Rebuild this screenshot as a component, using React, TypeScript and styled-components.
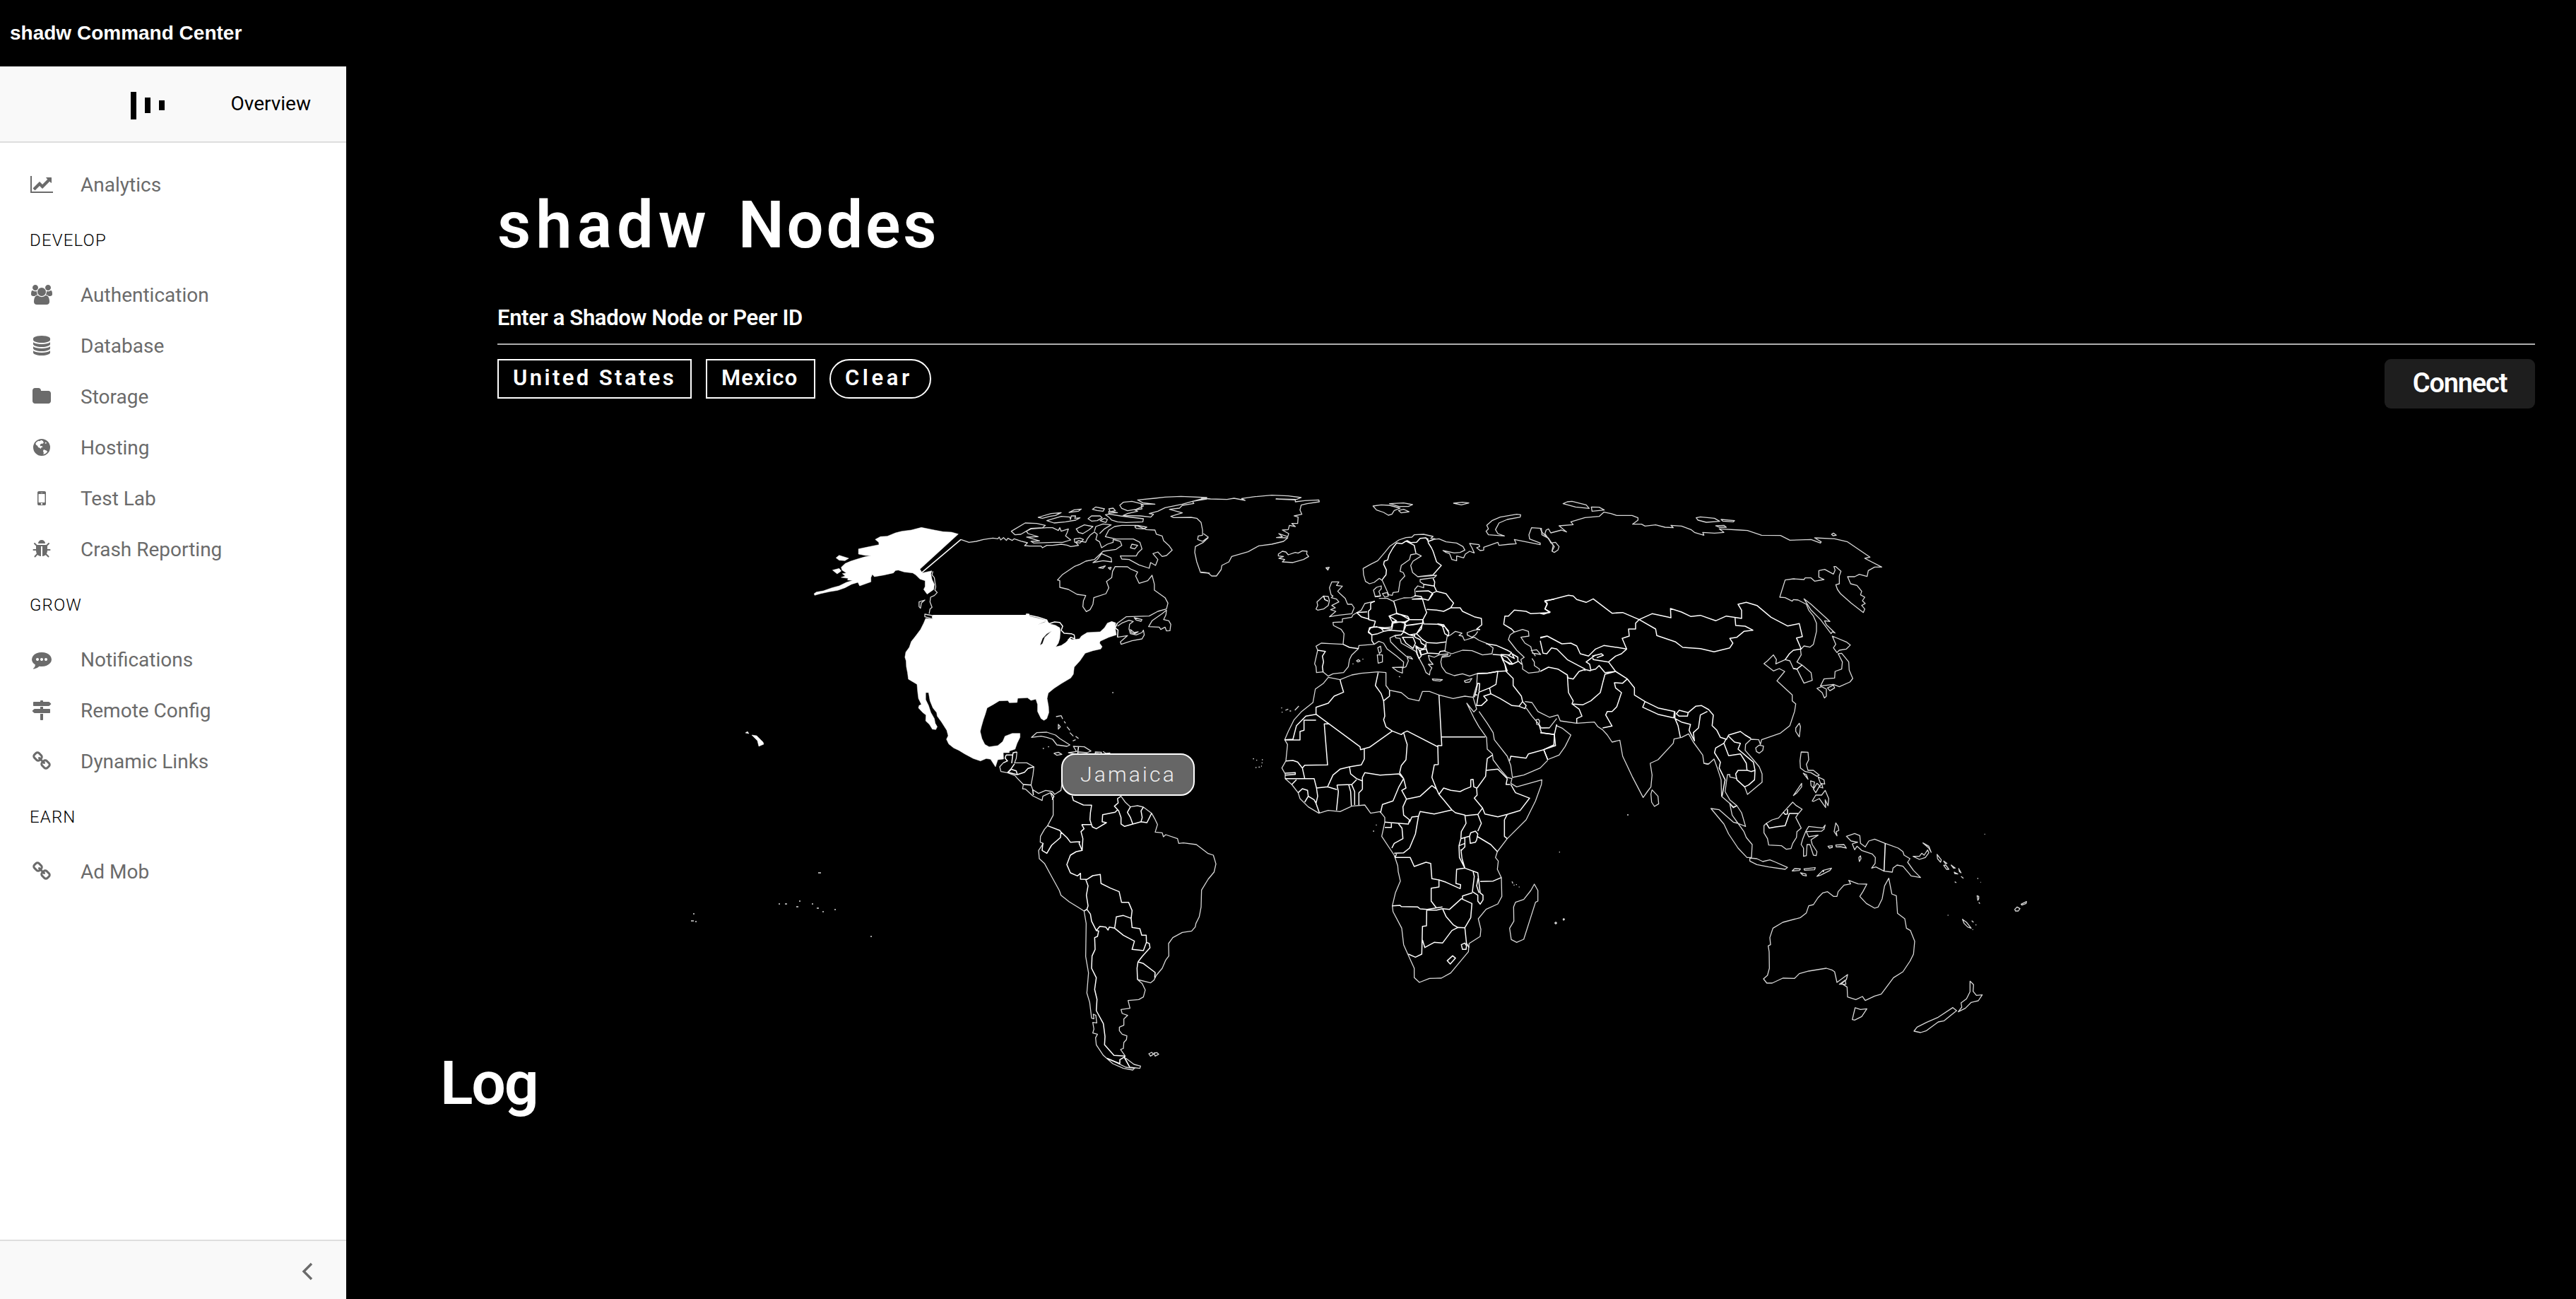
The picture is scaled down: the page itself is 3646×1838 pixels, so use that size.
import React from "react";
import styled, { createGlobalStyle } from "styled-components";

const GlobalStyle = createGlobalStyle`
  * { box-sizing: border-box; }
  body { margin: 0; background: #000; font-family: Roboto, sans-serif; }
  h1, h2, p { margin: 0; }
`;

const INK = "#6b6b6b";

const Page = styled.div`
  display: flex;
  flex-direction: column;
  width: 3646px;
  height: 1838px;
  overflow: hidden;
  background: #000;
`;

const TopBar = styled.header`
  display: flex;
  align-items: center;
  height: 94px;
  flex: none;
  padding: 0 14px;
  color: #fff;
  font: bold 28px "Liberation Sans", Arial, sans-serif;
  letter-spacing: 0;
`;

const Body = styled.div`
  display: flex;
  flex: 1;
  min-height: 0;
`;

const Sidebar = styled.aside`
  display: flex;
  flex-direction: column;
  width: 490px;
  flex: none;
  background: #fff;
`;

const Overview = styled.div`
  display: flex;
  align-items: center;
  justify-content: space-between;
  height: 108px;
  padding: 0 50px 2px 185px;
  background: #f9f9f9;
  border-bottom: 2px solid #dedede;
  font-size: 28px;
  color: #000;
`;

const Bars = styled.div`
  display: flex;
  align-items: center;
  gap: 12px;
  padding-top: 6px;
`;

const Bar = styled.span<{ $h: number }>`
  width: 8px;
  height: ${(p) => p.$h}px;
  background: #000;
`;

const Nav = styled.nav`
  flex: 1;
  padding-top: 24px;
`;

const Item = styled.a`
  display: flex;
  align-items: center;
  height: 72px;
  padding: 0 0 2px 41px;
  color: ${INK};
  font-size: 28px;
`;

const IconBox = styled.span`
  display: flex;
  justify-content: center;
  width: 36px;
  margin-right: 37px;
`;

const Section = styled.div`
  display: flex;
  align-items: center;
  height: 84px;
  padding: 0 0 1px 42px;
  color: #000;
  font-size: 24px;
  font-weight: 300;
  letter-spacing: 1.15px;
`;

const Collapse = styled.div`
  display: flex;
  align-items: center;
  justify-content: flex-end;
  height: 84px;
  padding: 4px 47px 0 0;
  background: #f9f9f9;
  border-top: 2px solid #dedede;
`;

const Main = styled.main`
  display: flex;
  flex-direction: column;
  flex: 1;
  padding: 169px 58px 0 214px;
  color: #fff;
`;

const Title = styled.h1`
  height: 108px;
  line-height: 112px;
  font-size: 92px;
  font-weight: 600;
  word-spacing: 15px;
  white-space: nowrap;
`;

const Word = styled.span<{ $track: number }>`
  letter-spacing: ${(p) => p.$track}px;
`;

const Field = styled.div`
  display: flex;
  align-items: flex-end;
  height: 117px;
  padding-bottom: 18px;
  border-bottom: 2px solid #adadad;
  font-size: 31px;
  line-height: 36px;
  font-weight: 600;
  letter-spacing: -0.35px;
`;

const Actions = styled.div`
  display: flex;
  align-items: flex-start;
  gap: 20px;
  height: 192px;
  padding-top: 20px;
`;

const Chip = styled.button<{ $w: number; $round?: boolean; $track: number }>`
  width: ${(p) => p.$w}px;
  height: 56px;
  padding: 0 0 3px 20px;
  border: 2px solid #fff;
  border-radius: ${(p) => (p.$round ? 28 : 0)}px;
  background: transparent;
  color: #fff;
  font: 600 31px Roboto, sans-serif;
  letter-spacing: ${(p) => p.$track}px;
  text-align: left;
  white-space: nowrap;
`;

const Connect = styled.button`
  width: 213px;
  height: 70px;
  margin-left: auto;
  padding: 0 0 2px;
  border: 0;
  border-radius: 9px;
  background: #1e1e1e;
  color: #fff;
  font: 600 38px Roboto, sans-serif;
  letter-spacing: -1.2px;
`;

const MapStage = styled.section`
  position: relative;
  height: 800px;
  margin-left: 196px;
  width: 2000px;
`;

const MapSvg = styled.svg`
  display: block;
  overflow: visible;
  path {
    vector-effect: non-scaling-stroke;
    stroke-linejoin: round;
  }
`;

const Coast = styled.path`
  fill: none;
  stroke: #d8d8d8;
  stroke-width: 1.3px;
`;

const Border = styled.path`
  fill: none;
  stroke: #fff;
  stroke-width: 1.5px;
`;

const Selected = styled.path`
  fill: #fff;
  stroke: #fff;
  stroke-width: 0.5px;
`;

const Tooltip = styled.div`
  position: absolute;
  left: 602px;
  top: 386px;
  display: flex;
  align-items: center;
  width: 189px;
  height: 60px;
  padding: 0 0 2px 25px;
  border: 2px solid #fff;
  border-radius: 20px;
  background: #666;
  color: #eee;
  font: 300 30px Roboto, sans-serif;
  letter-spacing: 3.2px;
`;

const LogTitle = styled.h2`
  margin-left: -81px;
  line-height: 106px;
  font-size: 86px;
  font-weight: 600;
  letter-spacing: -2.2px;
`;

interface Glyph { w: number; d: string }

const icons: Record<string, Glyph> = {
  chart: { w: 2048, d: "M2048 1536v128h-2048v-1536h128v1408h1920zM1920 288v435q0 21-19.5 29.5t-35.5-7.5l-121-121-633 633q-10 10-23 10t-23-10l-233-233-416 416-192-192 585-585q10-10 23-10t23 10l233 233 464-464-121-121q-16-16-7.5-35.5t29.5-19.5h435q14 0 23 9t9 23z" },
  users: { w: 1920, d: "M593 896q-162 5-265 128h-134q-82 0-138-40.5t-56-118.5q0-353 124-353 6 0 43.5 21t97.5 42.5 119 21.5q67 0 133-23-5 37-5 66 0 139 81 256zM1664 1533q0 120-73 189.5t-194 69.5h-874q-121 0-194-69.5t-73-189.5q0-53 3.5-103.5t14-109 26.5-108.5 43-97.5 62-81 85.5-53.5 111.5-20q10 0 43 21.5t73 48 107 48 135 21.5 135-21.5 107-48 73-48 43-21.5q61 0 111.5 20t85.5 53.5 62 81 43 97.5 26.5 108.5 14 109 3.5 103.5zM640 256q0 106-75 181t-181 75-181-75-75-181 75-181 181-75 181 75 75 181zM1344 640q0 159-112.5 271.5t-271.5 112.5-271.5-112.5-112.5-271.5 112.5-271.5 271.5-112.5 271.5 112.5 112.5 271.5zM1920 865q0 78-56 118.5t-138 40.5h-134q-103-123-265-128 81-117 81-256 0-29-5-66 66 23 133 23 59 0 119-21.5t97.5-42.5 43.5-21q124 0 124 353zM1792 256q0 106-75 181t-181 75-181-75-75-181 75-181 181-75 181 75 75 181z" },
  database: { w: 1792, d: "M896 768q237 0 443-43t325-127v170q0 69-103 128t-280 93.5-385 34.5-385-34.5-280-93.5-103-128v-170q119 84 325 127t443 43zM896 1536q237 0 443-43t325-127v170q0 69-103 128t-280 93.5-385 34.5-385-34.5-280-93.5-103-128v-170q119 84 325 127t443 43zM896 1152q237 0 443-43t325-127v170q0 69-103 128t-280 93.5-385 34.5-385-34.5-280-93.5-103-128v-170q119 84 325 127t443 43zM896 0q208 0 385 34.5t280 93.5 103 128v128q0 69-103 128t-280 93.5-385 34.5-385-34.5-280-93.5-103-128v-128q0-69 103-128t280-93.5 385-34.5z" },
  folder: { w: 1792, d: "M1728 608v704q0 92-66 158t-158 66h-1216q-92 0-158-66t-66-158v-960q0-92 66-158t158-66h320q92 0 158 66t66 158v32h672q92 0 158 66t66 158z" },
  globe: { w: 1792, d: "M896 128a768 768 0 1 1 0 1536a768 768 0 1 1 0-1536zM860 240L700 330 610 300 500 370 400 440 340 560 400 680 500 740 590 900 720 940 800 1030 880 900 1010 860 900 760 780 780 740 660 860 560 980 560 1120 430 1010 420 1040 330zM1250 420L1180 520 1280 560 1350 500zM1090 1080L1020 1210 1080 1390 1050 1530 1250 1460 1420 1290 1330 1180 1220 1150z" },
  mobile: { w: 1792, d: "M976 1408q0-33-23.5-56.5t-56.5-23.5-56.5 23.5-23.5 56.5 23.5 56.5 56.5 23.5 56.5-23.5 23.5-56.5zM1184 1248v-704q0-13-9.5-22.5t-22.5-9.5h-512q-13 0-22.5 9.5t-9.5 22.5v704q0 13 9.5 22.5t22.5 9.5h512q13 0 22.5-9.5t9.5-22.5zM992 400q0-16-16-16h-160q-16 0-16 16t16 16h160q16 0 16-16zM1280 384v1024q0 52-38 90t-90 38h-512q-52 0-90-38t-38-90v-1024q0-52 38-90t90-38h512q52 0 90 38t38 90z" },
  bug: { w: 1792, d: "M1696 960q0 26-19 45t-45 19h-224q0 171-67 290l208 209q19 19 19 45t-19 45q-18 19-45 19t-45-19l-198-197q-5 5-15 13t-42 28.5-65 36.5-82 29-97 13v-896h-128v896q-51 0-101.5-13.5t-87-33-66-39-43.5-32.5l-15-14-183 207q-20 21-48 21-24 0-43-16-19-18-20.5-44.5t15.5-46.5l202-227q-58-114-58-274h-224q-26 0-45-19t-19-45 19-45 45-19h224v-294l-173-173q-19-19-19-45t19-45 45-19 45 19l173 173h844l173-173q19-19 45-19t45 19 19 45-19 45l-173 173v294h224q26 0 45 19t19 45zM1216 384h-640q0-133 93.5-226.5t226.5-93.5 226.5 93.5 93.5 226.5z" },
  comment: { w: 1792, d: "M640 896q0-53-37.5-90.5t-90.5-37.5-90.5 37.5-37.5 90.5 37.5 90.5 90.5 37.5 90.5-37.5 37.5-90.5zm384 0q0-53-37.5-90.5t-90.5-37.5-90.5 37.5-37.5 90.5 37.5 90.5 90.5 37.5 90.5-37.5 37.5-90.5zm384 0q0-53-37.5-90.5t-90.5-37.5-90.5 37.5-37.5 90.5 37.5 90.5 90.5 37.5 90.5-37.5 37.5-90.5zm384 0q0 174-120 321.5t-326 233-450 85.5q-110 0-211-18-173 173-435 229-52 10-86 13-12 1-22-6t-13-18q-4-15 20-37 5-5 23.5-21.5t25.5-23.5 23.5-25.5 24-31.5 20.5-37 20-48 14.5-57.5 12.5-72.5q-146-90-229.5-216.5t-83.5-269.5q0-174 120-321.5t326-233 450-85.5 450 85.5 326 233 120 321.5z" },
  signs: { w: 1792, d: "M1745 297q10 10 10 23t-10 23l-141 141q-28 28-68 28h-1344q-26 0-45-19t-19-45v-256q0-26 19-45t45-19h576v-64q0-26 19-45t45-19h128q26 0 45 19t19 45v64h512q40 0 68 28zM768 1216h256v512q0 26-19 45t-45 19h-128q-26 0-45-19t-19-45v-512zM1600 768q26 0 45 19t19 45v256q0 26-19 45t-45 19h-1344q-40 0-68-28l-141-141q-10-10-10-23t10-23l141-141q28-28 68-28h512v-192h256v192h576z" },
  link: { w: 1792, d: "M1520 1216q0-40-28-68l-208-208q-28-28-68-28-42 0-72 32 3 3 19 18.5t21.5 21.5 15 19 13 25.5 3.5 27.5q0 40-28 68t-68 28q-15 0-27.5-3.5t-25.5-13-19-15-21.5-21.5-18.5-19q-33 31-33 73 0 40 28 68l206 207q27 27 68 27 40 0 68-26l147-146q28-28 28-67zM817 511q0-40-28-68l-206-207q-28-28-68-28-39 0-68 27l-147 146q-28 28-28 67 0 40 28 68l208 208q27 27 68 27 42 0 72-31-3-3-19-18.5t-21.5-21.5-15-19-13-25.5-3.5-27.5q0-40 28-68t68-28q15 0 27.5 3.5t25.5 13 19 15 21.5 21.5 18.5 19q33-31 33-73zM1712 1216q0 120-85 203l-147 146q-83 83-203 83-121 0-204-85l-206-207q-83-83-83-203 0-123 88-209l-88-88q-86 88-208 88-120 0-204-84l-208-208q-84-84-84-204t85-203l147-146q83-83 203-83 121 0 204 85l206 207q83 83 83 203 0 123-88 209l88 88q86-88 208-88 120 0 204 84l208 208q84 84 84 204z" },
};

const Icon = ({ name }: { name: string }) => {
  const g = icons[name];
  return (
    <svg width={(g.w / 1792) * 28} height={28} viewBox={`0 0 ${g.w} 1792`} fill={INK} fillRule="evenodd">
      <path d={g.d} />
    </svg>
  );
};

const menu: { section?: string; items: [string, string][] }[] = [
  { items: [["chart", "Analytics"]] },
  {
    section: "DEVELOP",
    items: [
      ["users", "Authentication"],
      ["database", "Database"],
      ["folder", "Storage"],
      ["globe", "Hosting"],
      ["mobile", "Test Lab"],
      ["bug", "Crash Reporting"],
    ],
  },
  {
    section: "GROW",
    items: [
      ["comment", "Notifications"],
      ["signs", "Remote Config"],
      ["link", "Dynamic Links"],
    ],
  },
  { section: "EARN", items: [["link", "Ad Mob"]] },
];

/* Each sheet of the map keeps its own local grid; the transform places it on the world canvas. */
interface Sheet { at: string; coast: string; border?: string; selected?: string }

const third = (x: number, y: number) => `translate(${x} ${y}) scale(0.33333)`;

const sheets: Sheet[] = [
  {
    at: "translate(1100 680) scale(0.40816 0.33333)",
    selected:
      "M130 487 128 480 136 473 160 468 190 455 215 447 240 432 262 424 244 422 246 415 222 411 236 405 226 395 240 392 225 380 222 368 236 352 255 342 278 333 300 325 325 318 307 318 282 312 282 290 310 283 353 272 352 262 340 250 358 238 382 236 410 222 432 215 465 210 500 199 545 210 575 217 605 219 628 227 495 376 503 392 536 383 533 396 537 420 545 440 543 462 520 482 508 462 513 450 513 425 495 418 480 400 470 392 440 388 420 380 410 382 403 392 370 401 337 408 330 398 325 412 325 430 286 447 280 432 258 440 235 455 210 466 180 472 150 480Z" +
      "M204 328 215 317 248 330 235 340 215 338ZM192 380 215 373 222 384 208 396Z" +
      "M538 572 862 572 864 565 874 566 876 576 905 584 935 594 945 608 965 614 980 625 982 640 980 670 975 690 966 706 985 700 1000 688 1015 670 1022 675 1048 672 1055 660 1075 645 1120 642 1135 625 1145 605 1160 598 1174 604 1172 625 1176 655 1150 665 1120 682 1118 690 1127 705 1122 715 1095 722 1068 733 1050 765 1030 792 1027 822 1018 838 985 862 960 882 940 902 936 925 941 960 942 985 935 1010 925 1018 915 1010 903 980 903 950 897 928 880 933 868 922 834 924 832 942 805 943 800 934 770 935 750 950 728 965 722 990 715 1015 708 1045 704 1065 710 1095 720 1120 735 1130 765 1125 782 1108 790 1085 815 1073 842 1073 842 1090 832 1115 825 1140 805 1148 805 1155 784 1155 785 1182 765 1185 757 1215 740 1183 725 1180 705 1190 680 1180 650 1160 630 1145 612 1135 595 1118 587 1098 593 1083 588 1060 570 1025 555 1000 553 985 540 965 530 935 525 900 515 900 515 930 525 955 533 985 545 1010 548 1030 555 1045 550 1057 538 1055 528 1035 515 1020 516 995 505 985 490 965 492 955 500 950 490 925 487 895 485 865 455 843 452 815 448 790 447 765 443 750 446 728 458 708 465 683 480 660 497 632 508 605 515 585 538 588Z" +
      "M952 638 935 650 920 670 911 700 920 692 928 665ZM903 612 935 598 925 600Z",
    border:
      "M500 392 637 250M540 572 865 572M876 572 905 580 935 592 940 608 962 600 980 602 990 618 985 635 995 648 1020 650 1030 655 1032 672 1018 665 1008 678M1180 665 1182 635 1172 625 1180 605M1045 1130 1042 1155",
    coast:
      "M637 250 665 262 690 258 715 250 748 244 765 247 770 240 775 252 785 242 795 254 800 245 815 254 822 247 845 257 868 264 858 276 875 278 915 278 920 285 935 275 955 275 985 270 1005 274 1018 280 1045 275 1035 262 1045 255 1070 262 1075 248 1085 232 1100 218 1110 228 1105 250 1118 260 1125 285 1145 270 1165 262 1165 250 1190 258 1195 275 1175 292 1130 300 1120 312 1100 335 1070 342 1050 355 1030 365 990 398 972 422 980 425 980 453 1010 462 1040 483 1070 488 1062 510 1060 535 1072 556 1085 548 1095 525 1098 497 1140 480 1150 455 1142 428 1160 412 1163 385 1172 365 1215 366 1225 375 1250 388 1243 405 1255 436 1285 425 1300 402 1308 440 1308 465 1345 497 1355 520 1350 545 1320 555 1290 575 1210 578 1180 605M1180 665 1215 658 1190 685 1193 695 1230 680 1265 672 1273 655 1270 635 1265 645 1245 655 1225 650 1220 630 1222 610 1235 598 1220 593 1195 605 1180 618" +
      "M1350 550 1335 565 1300 595 1288 620 1325 622 1330 632 1345 622 1350 638 1362 637 1365 610 1358 595 1340 590 1348 570ZM1238 582 1265 590 1262 597 1245 592ZM1225 632 1238 645 1252 642 1240 650 1228 645Z" +
      "M540 385 537 400 545 412 547 430 550 450 547 465 555 475 545 488 532 495 530 515 537 538 530 545 527 565M492 515 512 507 500 520 497 542 492 535ZM512 567 538 573 538 587 512 578Z" +
      "M812 215 860 180 900 182 930 190 920 200 880 203 845 228 825 230ZM864 215 880 205 935 200 955 200 975 212 980 200 985 215 1010 205 1005 222 1000 235 1018 252 990 262 960 262 890 265 880 258 910 256 865 240 905 238 870 225Z" +
      "M905 156 950 140 985 136 965 148 945 152 920 160ZM935 170 985 152 1015 155 1017 165 1020 150 1035 150 1032 160 1050 158 1035 168 1000 175 960 180ZM1012 135 1030 124 1055 121 1045 130ZM1093 122 1105 112 1135 120 1130 130 1110 127ZM1150 120 1165 117 1173 128 1155 132ZM1078 162 1090 150 1120 150 1127 158 1110 170 1090 172ZM1120 170 1135 160 1145 165 1140 178ZM1138 145 1150 142 1190 150 1270 162 1268 175 1210 178 1180 175 1160 168 1150 155ZM1150 130 1180 136 1150 138ZM1188 105 1200 92 1230 88 1262 98 1270 108 1245 122 1215 128 1195 118Z" +
      "M1250 82 1310 75 1345 70 1400 67 1490 72 1440 88 1405 100 1345 115 1320 130 1290 140 1305 143 1295 155 1260 150 1200 148 1215 140 1250 130 1240 124 1265 120 1262 100 1310 100 1268 94Z" +
      "M1037 205 1065 188 1095 195 1080 210 1060 225 1045 220ZM1100 215 1105 195 1130 184 1158 188 1135 205 1118 225M1030 248 1050 244 1062 250 1050 265 1032 262Z" +
      "M1138 238 1150 210 1170 195 1195 190 1245 190 1280 208 1310 210 1315 228 1335 235 1340 255 1358 275 1370 295 1350 318 1335 322 1320 303 1303 310 1320 335 1312 360 1295 348 1290 372 1255 358 1220 335 1195 333 1190 320 1245 320 1252 305 1265 290 1258 262 1235 248 1175 248ZM1230 270 1250 275 1240 290 1225 285ZM1125 310 1158 328 1160 345 1130 340 1095 348 1110 335ZM1115 370 1138 362 1130 372ZM1148 370 1158 368 1155 378ZM1240 195 1250 190 1282 198 1270 205 1245 203Z" +
      "M1490 78 1440 88 1445 97 1405 105 1395 117 1360 122 1405 137 1365 152 1375 157 1435 156 1455 160 1470 178 1475 210 1475 232 1460 235 1458 250 1475 258 1495 240 1478 225M1495 242 1478 262 1450 280 1448 305 1455 345 1468 390 1500 393" +
      "M882 1090 900 1070 935 1068 965 1080 980 1095 1015 1122 1005 1128 970 1122 955 1098 935 1090 915 1085ZM960 1158 975 1153 987 1162 970 1166ZM1027 1128 1065 1130 1088 1148 1075 1155 1045 1152 1040 1162 1010 1155 1038 1150ZM1103 1152 1125 1153 1122 1160 1103 1158Z" +
      "M967 1002 985 998 990 1012M975 1035 975 1055 982 1045ZM995 1022 1000 1030M1005 1045 1015 1060M1015 1070 1027 1085M1035 1085 1045 1095M1025 1105 1035 1100M921 1137h4M939 1130h4M1162 900h4M1130 1150 1140 1158 1155 1156",
  },
  {
    at: third(1700, 680),
    coast:
      "M0 75 40 78 110 80 140 75 187 84 172 76 230 68 300 62 370 65 425 72 405 80 318 78 400 82 400 90 440 85 500 82 502 90 450 98 425 104 420 125 428 143 395 150 412 155 410 182 385 182 400 195 375 190 370 208 345 210 372 225 368 238 330 225 345 238 320 242 368 243 350 258 300 270 245 277 200 302 130 322 118 345 88 360 85 378 65 405 45 405 30 392 0 388" +
      "M328 312 345 300 360 303 370 315 400 305 412 308 430 298 450 300 448 312 457 322 435 335 390 348 345 345 355 335 330 330 350 322 328 320ZM530 370 544 368 538 380ZM536 368 536 374" +
      "M757 415 735 432 715 438 698 428 690 400 688 373 720 355 750 340 780 305 800 280 840 252 870 242 895 240 905 230 945 228 985 237 975 245 995 247M988 250 1010 247 1040 260 1085 265 1112 280 1120 295 1100 305 1075 307 1027 297 1040 305 1055 310 1065 335 1085 340 1085 320 1115 328 1122 312 1140 300 1160 307 1150 285 1140 267 1180 272 1183 280 1170 285 1185 297 1200 295 1200 283 1260 262 1265 275 1310 270 1338 268 1330 250 1440 272 1440 265 1395 248 1392 230 1403 200 1445 203 1447 230 1475 245 1495 275 1490 300" +
      "M1357 145 1355 155 1300 165 1265 180 1250 208 1260 225 1288 235 1220 230 1210 215 1220 205 1213 190 1235 170 1270 155 1340 143ZM730 108 765 103 800 105 845 117 820 127 810 143 795 147 775 135 745 125ZM800 98 860 95 898 102 880 110 840 110ZM838 127 860 122 883 132 850 137ZM1072 96 1110 92 1137 95 1105 103Z" +
      "M757 415 770 425 797 485 812 487 815 475 838 472 845 427 865 405 858 390 845 385 850 360 885 335 890 315 915 310 935 320 900 342 890 360 898 390 920 408 985 400M920 408 1000 402 990 412 930 420 930 430 945 440 945 455 920 447 907 462 910 490 892 497 860 498 815 512 790 500 755 500" +
      "M740 495 732 465 745 453 765 447 765 460 755 470 762 490 745 492M770 480 790 475 795 490 780 495ZM738 512 695 522 680 550 645 570 640 580 600 587 600 600 560 602 562 615 595 632 607 650 603 695 545 692 510 690 488 703 495 720 482 778 488 790 490 815 518 812 540 830 560 820 605 815 625 790 630 760 640 740 668 713 670 700 735 695 755 682 775 690 790 715 830 745 860 770 858 795 870 790 880 765 875 750 898 758 890 748 870 745 835 715 805 685 802 668 822 658 828 668 845 670 850 690 912 725 918 740 945 790 955 815 970 825 972 810 980 795 965 780 985 780 970 762 965 742 990 750 1010 740 1050 735" +
      "M1060 655 1045 660 1040 690 1035 725 1065 735 1110 720 1150 722 1195 740 1235 735 1240 710 1215 692 1180 678 1160 665 1118 678 1110 660 1095 657 1108 648 1080 640 1060 655M1185 632 1160 635 1130 645 1130 655 1150 665 1165 655 1175 640M1060 738 1055 745 1022 750 1018 770 1022 790 1040 815 1075 828 1110 820 1140 830 1170 820M1022 745 1050 740" +
      "M1365 785 1358 760 1372 750 1340 720 1305 675 1312 655 1330 643 1365 632 1390 640 1392 660 1358 665 1375 690 1400 705 1405 725 1420 745M1405 755 1415 770 1415 785 1437 800 1435 812 1390 817 1365 800 1365 785M1400 722 1425 718 1442 738 1405 732" +
      "M545 578 580 572 640 565 650 540 640 525 622 525 612 500 590 480 580 470 600 448 575 445 585 430 555 430 545 455 552 485 560 490 553 497 575 503 585 515 555 530 570 540 550 548 572 555ZM488 545 495 530 492 515 520 490 540 492 545 510 540 530 520 545 495 550Z" +
      "M812 793 855 792 855 817 835 810ZM748 740 770 740 770 770 752 775ZM750 710 762 703 765 725 757 735ZM982 842 1025 845 1015 851 985 848ZM1118 850 1150 840 1140 855 1122 857ZM643 778h4M660 765 668 760 675 766 666 770ZM685 758h4M840 831 845 834M340 965h4M342 983h4M358 975 370 970M376 978h6M398 975 415 957",
    border:
      "M768 422 785 400 787 380 775 355 778 342 792 337 798 315 815 285 830 265 852 268 868 258 875 255 890 263 915 262 930 245 955 243 965 258 988 250M985 400 1020 360 1000 345 985 300 978 285 965 265 962 245M870 257 905 275 912 308M945 440 990 448 992 430 985 415M912 470 965 468 982 478 1000 470 990 448M895 503 935 500 965 508 985 480M905 488 935 492 940 503M895 503 940 503 952 545 958 560 942 590 885 590 878 577 845 568 830 562 828 545 818 512M965 508 982 478 1000 470 1040 480 1055 500 1072 520 1060 540 1030 555 1000 550 958 547M1060 540 1100 540 1110 555 1160 578 1190 585 1192 612 1170 630 1185 632M1052 640 1035 620 1005 610 945 608 942 590M1005 608 1025 618 1035 650 1050 660 1052 645 1040 628 1030 612Z" +
      "M740 492 762 490M738 512 720 520 720 545 710 555 712 590 740 597 733 620 780 625 808 622 812 600 830 595 798 575 828 565M660 560 705 557M660 560 680 578 710 587M603 695 630 708 668 713M735 695 725 680 725 655 710 645 715 625 733 620M710 640 720 625 745 620 765 628 775 640 750 650 725 655ZM765 628 810 630 815 605 845 600 865 605 860 640 800 635 775 640M798 575 828 565 850 570 885 590 865 600 812 600ZM865 605 885 590 942 590 940 605 900 612 870 615ZM860 640 870 615 940 605 935 630 915 650 885 655ZM940 610 915 650 940 675 960 688 1000 690 1040 685M955 690 955 710 962 732 1010 735 1015 725 1038 722M905 650 908 665 930 675 935 690 952 700 945 715 928 712 910 700M855 665 900 665 910 690 900 712 870 690ZM822 658 850 655 860 642 885 655 905 660M912 705 918 735 925 755 935 745 925 718ZM930 720 955 715 962 732 935 740Z" +
      "M520 490 525 505 540 512M495 720 528 725 515 745 520 770 515 790 518 812M1170 820 1215 818 1260 810 1300 808 1290 780 1280 760 1272 740 1238 738M1210 692 1255 700 1300 720 1318 730 1310 740 1272 738M1272 740 1300 750 1322 778 1310 780 1285 762ZM1300 740 1330 755 1320 735 1345 750 1345 765 1362 780M1290 765 1320 780 1345 768" +
      "M1330 643 1318 630 1285 610 1290 575 1305 575 1330 550 1380 555 1400 565 1480 560 1460 545 1470 525 1460 510 1500 503",
  },
  {
    at: third(1400, 1060),
    coast:
      "M118 12 115 40 108 58 160 58 190 75 186 110 178 152 185 172 210 188 240 175 268 180 278 192 305 175 310 140M60 58 45 75 50 95 78 100 110 112 118 122 145 150 142 168 155 170 185 198 225 218 228 200 260 185 268 205 272 215 272 280 248 325" +
      "M560 200 578 225 600 245 630 240 655 246 690 272 703 295 715 320 705 352 735 355 740 372 750 363 800 380 805 400 825 398 880 405 930 443 952 450 963 487 955 522 930 552 902 598 900 670 892 712 878 740 875 755 860 772 820 778 780 800 762 825 763 878 750 895 735 930 710 960 700 980 685 992 630 978 650 995 663 1022 655 1052 635 1063 590 1067 598 1100 560 1105 565 1122 588 1130 572 1145 572 1172 553 1180 553 1195 565 1210 585 1217 583 1233 572 1245 570 1270 558 1275 578 1303" +
      "M248 325 235 340 218 370 217 395 230 400 210 430 213 465 235 485 265 540 298 600 305 620 340 648 403 687 412 740 410 880 422 950 415 1035 427 1075 435 1142 445 1145 442 1125 453 1130 457 1162 440 1160 445 1188 440 1205 460 1210 452 1225 455 1255 485 1300 525 1335 570 1355 610 1362 617 1355 580 1350 540 1330 500 1312M575 1310 597 1350 640 1355 643 1345 615 1338 580 1312" +
      "M678 1293 690 1287 698 1295 685 1303ZM700 1290 712 1288 720 1295 705 1303ZM1120 41h5M1134 47h4M1158 45h4M1157 58h4M1131 78h4M1144 76h6M1155 72h3",
    border:
      "M72 25 100 25 102 15 118 12M100 25 96 60M72 25 68 38 78 50 60 58M78 100 92 85 108 62M92 85 115 92 120 108 150 98 165 82 190 75M92 88 80 98 118 108M145 150 178 152M185 172 188 195M262 185 275 200 268 215M352 198 358 218 400 237 435 238 430 270 428 300 438 330 455 338 498 312 480 308 482 278 535 268 545 258M393 320 435 320M393 320 403 338 390 350 398 380 395 430M560 200 545 210 548 228 532 242 550 262 560 290 560 318 575 328 610 318 600 290 587 268 600 245M655 246 645 262 650 290 645 308 610 318M690 272 670 312 645 308M632 903 655 910 705 948 703 970M632 903 628 930 630 978M632 903 650 880 683 843 680 825 668 820" +
      "M533 760 540 712 570 706 603 718 607 757 640 762 648 790 667 790 668 820 655 855 607 850 617 815 570 790ZM403 687 415 680M410 553 420 580 413 620 420 665 415 680 430 700 435 730 455 770 470 752 495 755 505 768 510 755 533 760M603 718 607 685 592 650 562 650 552 605 515 590 475 570 472 532 440 537 415 553 388 552 388 527 375 538 345 525 330 490 345 450 370 435 395 430 382 400 385 393 345 395 330 375 305 352 300 345 248 325M305 352 303 375 265 408 245 442 225 430 228 400" +
      "M455 770 465 772 460 795 448 800 450 850 437 878 435 930 455 970 448 1020 458 1062 455 1110 485 1165 492 1220 490 1255 530 1300 578 1303M578 1305 555 1318 555 1335 500 1312M575 1310 597 1350",
  },
  {
    at: third(1780, 920),
    coast:
      "M300 115 280 140 245 165 235 222 185 262 155 295 130 345 115 380 127 400 120 470 103 500 117 525 117 545 145 570 172 605 180 630 215 665 260 692 300 680 350 685 400 662 455 657 480 692 520 685 540 710 540 730 527 790 560 840 580 870 595 915 597 940 606 980 585 1030 572 1085 575 1110 612 1180 620 1250 640 1295 665 1350 665 1390 687 1410 730 1393 780 1392 820 1370 870 1310 895 1280 898 1245 945 1215 948 1185 937 1140 970 1100 1020 1077 1037 1045 1035 965 1018 930 1022 895 1010 880 1018 855 1060 800 1140 720 1180 640 1205 570 1207 550 1100 580 1075 565 1080 545 1060 540 1030 505 1000 465 997 440 975 420 972 370 940 325 920 290 888 225 918 262 930 250 915 200 880 195 830 205 770 190 730 175 700 175 685 215 640 205 610 180 560 170 545 150 545 95 510 92 440 98 400 105 350 125 300 115" +
      "M940 260 975 310 1000 350 1005 380 1060 450 1075 490 1082 540 1130 530 1200 500 1232 467M915 200 930 150 933 100M1135 218 1165 222 1190 260 1200 265M1140 245 1165 280 1195 315 1205 330 1240 330M1183 295 1192 293 1197 300 1195 318 1185 315Z" +
      "M1175 993 1190 1020 1190 1065 1180 1070 1130 1227 1100 1240 1077 1228 1070 1180 1088 1150 1087 1090 1095 1070 1130 1058 1160 1020ZM1080 982 1084 990M1087 997h4M1097 995h4M1109 1005h3M1280 857h4M1262 1158 1266 1154 1270 1158 1266 1162ZM1297 1142 1300 1139 1303 1143 1299 1146ZM502 742h4M490 768h5",
    border:
      "M350 125 355 145 365 178 325 195 300 225 248 242 248 272 205 280 165 320 150 378 115 380M115 381 180 381 180 345 197 340 197 297 248 297M248 272 435 410 437 422 475 412 572 343M305 313 283 313 297 487 200 488 190 500 170 475 150 468 120 470M453 420 453 462 440 487 390 495 350 505 320 530 297 580 250 585M512 95 500 150 525 185 535 215 540 280 535 295 545 325 572 343 610 358 620 350 635 343 765 410M560 170 560 195 535 215M770 190 782 405 765 405 767 485 750 487 740 540 760 590 770 612M782 368 967 368M620 350 627 375 635 400 630 465 610 490 603 520 620 545" +
      "M445 590 445 540 455 520 520 530 600 525 620 545 600 580 575 640 530 655 522 690M390 495 395 525 420 545 445 555M445 590 430 605 430 657M337 572 400 570 420 550M400 572 412 600 412 657M387 572 395 600 398 660M337 572 343 600 335 680M297 580 337 592M190 500 200 545 240 545 250 585 255 620 248 650 262 690M117 545 160 545 200 545M145 570 165 550M172 605 190 588 212 595 215 620 200 645M215 620 240 635 248 650M117 522 160 520 160 527 117 530" +
      "M610 530 620 545 630 585 612 595 632 632 617 665 620 700 645 720 640 738 540 730M632 632 690 620 740 575 760 590M770 612 790 635 825 678 750 695 690 685 683 705 655 708 645 730M683 705 670 780 645 840 620 860 580 862M540 752 568 752 568 732M597 735 613 755 617 800 580 820 570 840M583 880 590 865M585 880 648 880 665 918 715 900 735 905 740 970 770 975 770 1005 737 1010 737 1065 760 1095M572 1085 605 1083 610 1088 680 1090 690 1098 720 1100 785 1090M718 1103 760 1103 785 1097M718 1103 717 1170 700 1172 697 1290 670 1303 640 1290M700 1230 710 1262 750 1240 785 1243 825 1190 850 1177 880 1178 887 1245 898 1262" +
      "M785 1097 800 1130 830 1165 850 1177M785 1097 815 1100 865 1055 910 1075 905 1135 880 1178M770 975 800 985 860 1012 862 995 842 990 845 930 880 925 935 945 945 1030 957 1040 957 1060 945 1078 935 1065 935 1040 912 1025 920 960 915 940M938 960 930 1000 940 1030M912 1030 870 1043 870 1055M945 982 1000 980 1035 965M865 1250 880 1243 887 1255 885 1270 870 1270ZM805 1318 828 1297 840 1307 818 1332Z" +
      "M825 678 840 690 880 700 885 735 865 770 863 800 855 830 857 880 880 925M880 925 868 885 863 845M863 800 880 795 900 790M935 792 990 825 1018 855M900 790 905 775 925 768 935 780 930 805 925 815 903 820ZM855 830 880 820 880 795M880 820 880 835 865 850M880 703 935 697 955 670 920 628 932 615 930 585 918 580 915 548 905 550 905 580 880 590 860 600 820 595 790 585 770 612M935 697 950 735 935 768M955 670 965 695 1020 707 1060 697 1115 680 1155 628 1095 605 1075 570M1060 697 1048 720 1048 790 1060 800M932 585 968 535 970 510 1020 505 1060 545M970 510 975 460 997 445M1060 545 1055 570 1072 570" +
      "M933 98 980 97 1020 90 1012 145 985 160 940 178 937 190 930 235 950 235 975 212 960 195 990 185 985 160M990 185 1030 205 1080 235 1110 238 1125 218 1120 195 1085 150 1085 120 1055 90 1050 60M928 170 935 140 943 142 940 175M920 200 930 165M925 190h8M1110 238 1135 248 1140 235 1125 218M1195 315 1205 350 1260 358 1258 402 1215 422 1150 440 1140 458 1075 450 1070 470M1215 422 1232 465",
  },
  {
    at: third(2180, 690),
    coast:
      "M0 175 10 192 35 215 45 235 65 232 80 250 75 265 60 275 50 270 60 250 40 225 20 195 25 180 35 175 45 192 90 180 112 188 80 162 140 157 130 145 190 127 250 122 270 104 300 110 325 118 390 118 415 128 415 138 392 155 430 155 445 163 490 158 530 168 565 170 555 160 600 163 640 178 655 190 695 202 690 190 740 193 780 190 760 175 850 180 880 182 940 202 1020 203 1060 223 1150 220 1190 235 1193 230 1165 213 1250 217 1305 230 1400 295 1378 300 1450 337 1420 337 1393 352 1388 377 1355 368 1335 378 1305 378 1318 408 1345 415 1365 440 1360 455 1378 465 1368 480 1380 492 1365 500 1378 515 1372 530 1320 490 1275 450 1262 432 1255 412 1270 408 1270 375 1277 355 1255 335 1247 335 1252 350 1245 367 1208 347 1183 352 1183 380 1205 390 1165 397 1150 383 1125 383 1120 390 1075 387 1040 392 1017 465 1040 467 1070 482 1075 475 1095 477 1130 495 1140 520 1160 545 1173 575 1173 610 1160 665 1145 677 1120 672 1108 685" +
      "M97 68 115 60 135 58 195 73 208 88 150 82ZM217 82 250 83 272 95 220 100ZM662 128 680 124 740 130 762 143 705 147 670 138ZM768 135 825 140 820 145 775 142ZM745 162 780 160 790 168 760 168ZM1237 198 1245 193 1257 202 1243 204ZM1120 472 1150 495 1230 568 1207 565 1215 582 1252 617 1240 612 1235 620 1190 560 1150 520Z" +
      "M0 955 40 975 75 965 85 990 155 1000 230 995 245 1015 265 1028 285 1050 305 1080 338 1072 350 1140 390 1225 437 1315 455 1290 470 1270 475 1220 467 1170 500 1155 565 1085 568 1067 600 1060 630 1045 650 1080 690 1135 695 1170 715 1173 738 1152 752 1190 768 1240 770 1310M0 1020 40 1018 70 980M68 1010 95 1022 130 1050 105 1100 80 1135 30 1155M0 635 28 630" +
      "M1040 730 1000 748 1003 730 990 710 965 735 950 747 990 778 1015 768 1038 780 1005 820 1070 880 1070 905 1085 918 1080 950 1060 1010 1020 1042 940 1070 935 1090 928 1070 895 1068 872 1090 870 1115 905 1155 930 1185 942 1215 942 1250 880 1302 868 1270M1105 685 1108 710 1090 740 1112 753 1150 785 1155 818 1120 830 1090 770 1075 768 1060 735 1040 730" +
      "M1240 630 1300 655 1317 668 1300 685 1270 690 1260 700 1245 680 1255 665ZM1265 705 1280 703 1310 740 1312 775 1327 810 1315 825 1270 845 1245 835 1190 842 1205 812 1250 808 1252 780 1280 770 1283 740ZM1175 852 1195 845 1215 855 1215 885 1207 893 1197 870ZM1220 850 1245 838 1250 850 1230 862ZM1100 1000 1105 1015 1100 1058 1085 1035 1085 1020ZM915 1105 930 1093 948 1097 945 1115 930 1127 918 1120ZM475 1283 500 1310 503 1342 485 1353 473 1335 470 1300Z" +
      "M785 1290 795 1218 805 1218 805 1228 835 1235M785 1290 805 1325 835 1350M770 1310 810 1345" +
      "M1108 1122 1137 1123 1140 1155 1130 1175 1137 1200 1160 1200 1185 1220 1175 1225 1150 1210 1125 1205 1105 1190 1103 1160ZM1117 1212 1130 1218 1137 1238ZM1148 1245 1165 1250 1160 1275 1150 1265ZM1175 1255 1187 1265 1170 1295 1160 1280ZM1180 1228 1205 1240 1208 1258 1190 1255ZM1195 1255 1200 1275 1185 1270ZM1155 1330 1170 1305 1195 1305 1210 1285 1225 1320 1222 1350 1210 1325 1212 1358 1185 1320 1160 1332ZM1075 1307 1110 1255 1110 1270 1090 1295Z",
    border:
      "M18 483 120 457 140 460 155 475 195 487 225 472 305 533 350 530 420 560 405 575 405 600 375 600 378 630 348 640 367 685 340 680 270 670 235 685 205 715 170 705 155 672 130 660 92 663 30 630 0 638M18 483 30 490 20 515 42 528 15 537 0 533M0 650 12 703 28 705 48 680 70 685 115 730 190 770 190 778M367 685 345 705 320 715 290 740 225 730 222 715 260 705 268 712 240 722M235 710 195 740 210 750 215 775M215 775 235 770 250 755 275 785 320 780 290 740" +
      "M0 780 35 762 75 770 115 795 118 808 140 812 165 780 190 772 215 778M320 780 275 792 265 830 255 870 215 905 180 922 135 918 140 905 120 870 115 795M135 918 165 940 177 970 155 980 155 1000M320 780 370 812 400 850 400 880 445 908M370 812 350 830 315 828 320 850 345 870 325 930 305 950 285 950 278 965 305 1012 265 1020M70 1005 60 1048 0 1040M60 1048 65 1095 15 1112 32 1155" +
      "M445 908 500 935 570 950 567 977 500 962 435 932ZM578 960 590 945 628 955 625 970 590 970ZM572 950 572 980 600 995 638 1005 632 1030 655 1075 650 1040 672 1020 680 965 710 950M572 980 585 1010 595 1060M628 955 660 928 685 925 715 942 735 965 730 1010 750 1030 765 1060 790 1068M420 560 475 535 555 552 553 513 600 528 640 547 680 542 745 565 790 545 855 555 855 520 840 495 875 487 920 500 980 550 1050 587 1100 577 1113 632 1088 638 1108 685 1075 690 1058 705 1040 730M1075 768 1090 770 1112 753M895 1065 870 1050 850 1035 800 1050 790 1070" +
      "M420 560 490 600 495 628 575 655 605 678 680 683 738 697 805 680 818 660 805 640 835 635 865 610 903 605 870 588 830 585 827 550M800 1055 825 1080 850 1085 840 1110 905 1165 912 1200 910 1240 885 1262 868 1270 835 1240 830 1215 840 1200 880 1200 895 1205 912 1200M790 1065 780 1085 745 1105 740 1125 765 1165 760 1190 785 1240 772 1310M780 1085 800 1138 850 1130 875 1170 878 1200M805 1340 820 1358 835 1350",
  },
  {
    at: third(2380, 1080),
    coast:
      "M125 192 160 197 220 250 240 255 265 290 275 315 300 345 297 400 278 400 240 360 200 300 180 258ZM205 172 220 185 235 180 255 210 272 268 240 255 215 220ZM290 402 320 405 345 417 375 410 400 420 450 442 440 450 370 440 320 430 290 415ZM470 457 480 447 505 448 500 455ZM520 448 568 443 565 452 522 454ZM505 465 528 470 530 478 515 475ZM575 480 600 455 637 445 630 455 590 475Z" +
      "M360 255 385 240 412 232 435 205 472 165 485 178 512 195 495 215 485 230 508 275 490 290 488 315 472 340 465 362 445 365 425 350 370 347 365 320 350 295 350 265ZM527 290 540 268 600 275 610 262 605 280 595 288 530 290 540 312 580 305 550 325 555 345 575 375 572 392 560 390 545 345 533 345 530 392 518 395 518 360 508 345 515 320ZM655 253 665 268 668 285 657 290 660 308 648 290ZM622 352 640 350 640 357 628 360ZM655 347 690 345 700 360 675 354 657 355ZM753 400 760 393 762 405 755 417ZM95 0 110 4 118 0" +
      "M700 310 735 298 757 307 760 340 780 355 795 330 820 322 865 340 920 360 940 375 945 390 970 405 960 420 985 455 1015 485 975 478 940 437 915 432 898 445 895 462 860 458 825 440 807 445 822 425 823 400 810 385 765 370 745 352 735 367 725 342 748 335 720 330ZM983 395 1010 395 1020 382 1030 390 1045 368 1050 380 1035 400 1010 408ZM1025 338 1050 352 1060 378 1050 360Z" +
      "M1085 387 1103 410 1100 420 1087 405ZM1113 415 1127 425 1120 426ZM1113 433 1122 432 1135 450 1125 450ZM1145 432 1162 445 1155 445ZM1158 462 1173 470 1160 468ZM1177 447 1187 465 1180 460ZM1187 480 1197 488M1160 503 1167 507M1256 489h4M1269 505h2M1255 562 1262 565 1262 575 1258 582ZM1262 590 1267 596M1130 645h3M1286 301h3M1193 662 1210 675 1230 700 1215 695 1200 680ZM1232 668 1240 675M1248 686h4M1235 706h3M1415 620 1425 610 1437 617 1430 627 1418 627ZM1442 598 1465 587 1463 595 1445 602Z" +
      "M348 915 365 900 373 870 372 800 368 775 378 770 375 740 388 700 430 675 505 655 530 635 540 605 560 600 580 570 600 550 620 545 645 565 660 565 665 545 690 517 718 512 710 497 750 512 787 513 770 545 757 565 785 595 820 615 835 610 852 575 862 520 880 488 893 555 912 562 917 637 948 660 955 700 972 710 990 755 985 810 970 840 940 885 900 910 848 980 820 988 780 1007 768 990 740 1003 705 992 703 950 680 935 700 918 705 897 660 930 650 885 640 878 615 870 540 882 500 893 480 913 430 912 385 933 362 933ZM670 938 695 920 698 938ZM737 1038 760 1045 787 1042 765 1075 735 1090 725 1088Z" +
      "M1225 925 1240 940 1238 968 1252 985 1277 983 1260 1008 1230 1015 1205 1040 1175 1055 1190 1035 1187 1017 1210 1000 1225 970ZM1152 1037 1168 1050 1115 1093 1090 1098 1040 1135 1015 1143 987 1137 1000 1120 1040 1100 1090 1078Z",
    border: "M865 340 860 458M360 255 372 275 400 270 440 265 458 213 495 213M432 208 440 217 450 215 450 195M602 455 602 462",
  },
  {
    at: "translate(0 0)",
    selected: "M1055 1037 1058 1035 1060 1038ZM1064 1040 1071 1041 1074 1044 1080 1050 1081 1053 1074 1056 1072 1048Z",
    coast:
      "M978 1303h4M984 1304h2M981 1293h2M1102 1279h2M1111 1279h3M1127 1283h3M1131 1275h2M1149 1279h2M1156 1285h3M1164 1290h2M1158 1235h4M1181 1287h2M1232 1325h2M2303 1153h2",
  },
];

export default function App() {
  return (
    <Page>
      <GlobalStyle />
      <TopBar>shadw Command Center</TopBar>
      <Body>
        <Sidebar>
          <Overview>
            <Bars>
              <Bar $h={39} />
              <Bar $h={22} />
              <Bar $h={14} />
            </Bars>
            <span>Overview</span>
          </Overview>
          <Nav>
            {menu.map((group, i) => (
              <React.Fragment key={i}>
                {group.section && <Section>{group.section}</Section>}
                {group.items.map(([icon, label]) => (
                  <Item key={label}>
                    <IconBox>
                      <Icon name={icon} />
                    </IconBox>
                    {label}
                  </Item>
                ))}
              </React.Fragment>
            ))}
          </Nav>
          <Collapse>
            <svg width="16" height="26" viewBox="0 0 16 26" fill="none" stroke={INK} strokeWidth="3.4">
              <path d="M14 2 3 13 14 24" />
            </svg>
          </Collapse>
        </Sidebar>
        <Main>
          <Title>
            <Word $track={7}>shadw</Word> <Word $track={3.8}>Nodes</Word>
          </Title>
          <Field>Enter a Shadow Node or Peer ID</Field>
          <Actions>
            <Chip $w={275} $track={3.4}>United States</Chip>
            <Chip $w={155} $track={1.2}>Mexico</Chip>
            <Chip $w={144} $track={4.6} $round>Clear</Chip>
            <Connect>Connect</Connect>
          </Actions>
          <MapStage>
            <MapSvg width="2000" height="860" viewBox="900 680 2000 860">
              {sheets.map((s, i) => (
                <g key={i} transform={s.at}>
                  {s.selected && <Selected d={s.selected} fillRule="evenodd" />}
                  <Coast d={s.coast} />
                  {s.border && <Border d={s.border} />}
                </g>
              ))}
            </MapSvg>
            <Tooltip>Jamaica</Tooltip>
          </MapStage>
          <LogTitle>Log</LogTitle>
        </Main>
      </Body>
    </Page>
  );
}
